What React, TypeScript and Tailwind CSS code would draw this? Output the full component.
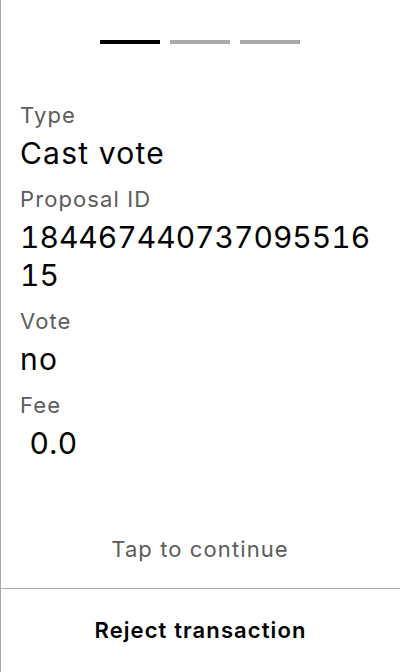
import React from "react";

const rows: { label: string; value: string; pre?: boolean; num?: boolean }[] = [
  { label: "Type", value: "Cast vote" },
  { label: "Proposal ID", value: "18446744073709551615", num: true },
  { label: "Vote", value: "no" },
  { label: "Fee", value: " 0.0", pre: true },
];

export default function App() {
  return (
    <div
      className="w-[400px] h-[672px] bg-white border-l border-[#aaaaaa] flex flex-col"
      style={{ fontFamily: "Inter, 'Noto Sans', sans-serif" }}
    >
      <div className="flex-1 flex flex-col pl-[19px] pr-5">
        <div className="pt-10 flex justify-center gap-[10px] -ml-px">
          <div className="w-[60px] h-1 bg-black" />
          <div className="w-[60px] h-1 bg-[#aaaaaa]" />
          <div className="w-[60px] h-1 bg-[#aaaaaa]" />
        </div>
        <div className="mt-[57px] flex flex-col">
          {rows.map((r, i) => (
            <div key={r.label} className={i === 0 ? "" : "mt-[13px]"}>
              <div className="text-[22px] leading-7 tracking-wider text-[#5c5c5c]">{r.label}</div>
              <div
                className={
                  "mt-[5px] text-[30px] leading-[38px] text-black break-all " +
                  (r.num ? "tabular-nums tracking-normal " : "tracking-[0.04em] ") +
                  (r.pre ? "whitespace-pre" : "")
                }
              >
                {r.value}
              </div>
            </div>
          ))}
        </div>
        <div className="mt-auto mb-[25px] text-center text-[22px] leading-7 tracking-wider text-[#5c5c5c]">
          Tap to continue
        </div>
      </div>
      <div className="border-t border-[#aaaaaa] h-[84px] flex items-center justify-center">
        <span className="text-[22px] font-semibold tracking-wider text-black">Reject transaction</span>
      </div>
    </div>
  );
}
